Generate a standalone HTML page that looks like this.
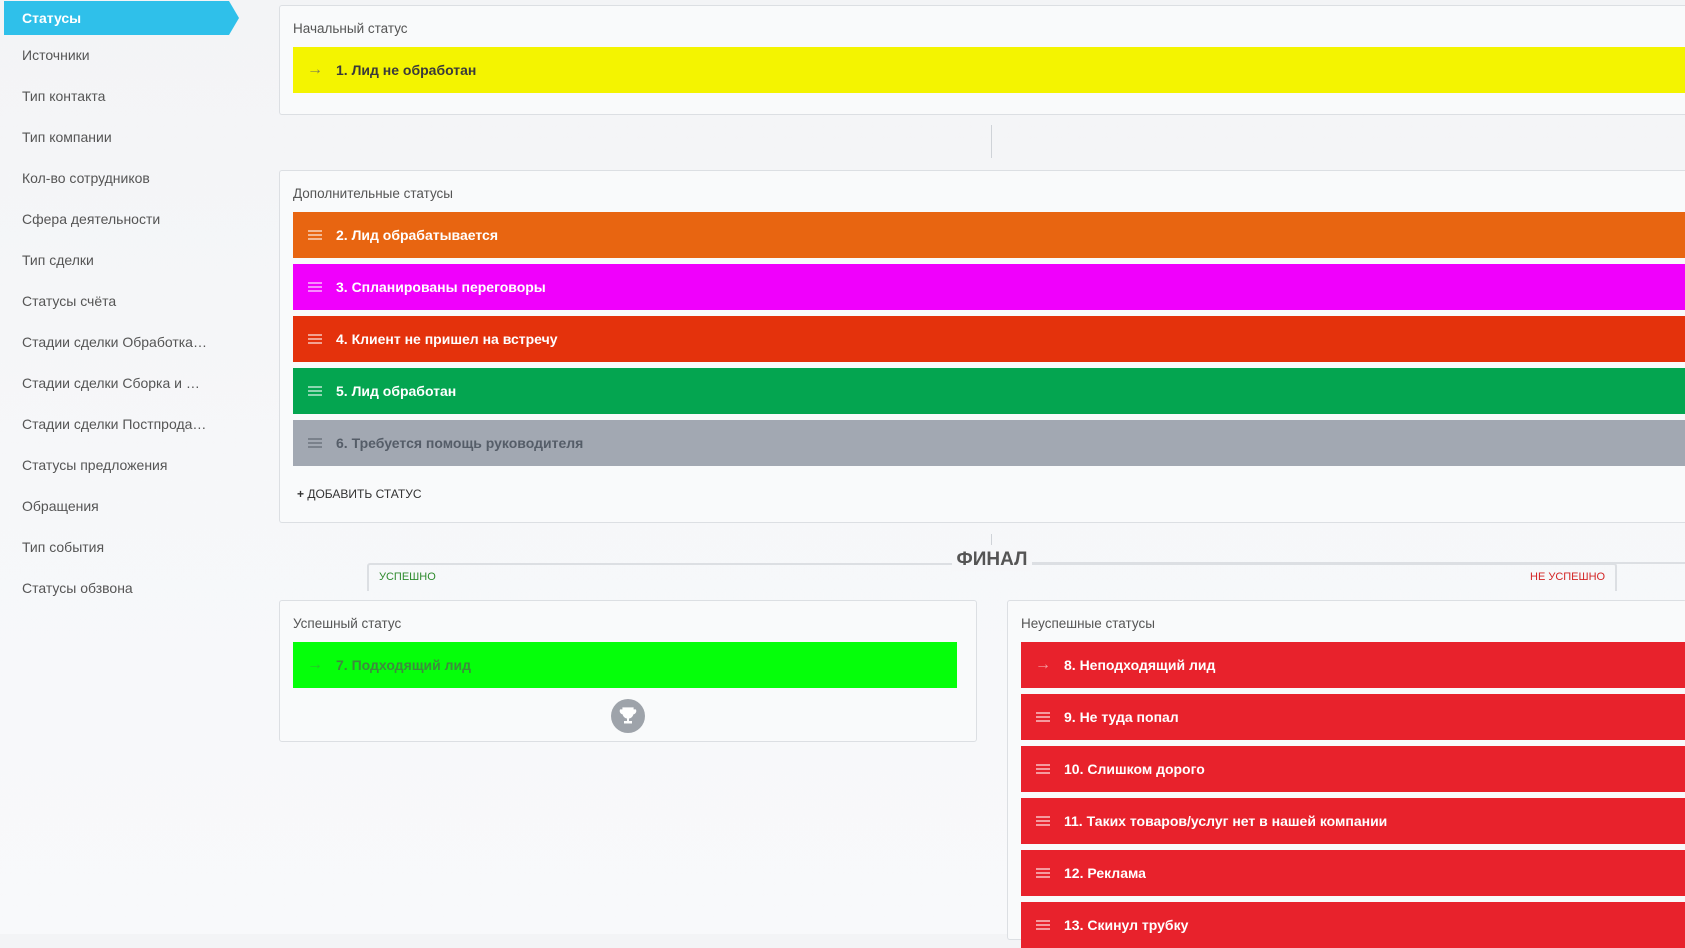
<!DOCTYPE html>
<html><head><meta charset="utf-8"><style>
*{margin:0;padding:0;box-sizing:border-box}
body{width:1685px;height:934px;overflow:hidden;position:relative;font-family:"Liberation Sans",Arial,sans-serif;background:linear-gradient(180deg,#f3f4f6 0%,#f6f7f9 50%,#f8f9fb 100%);color:#333}
.tab{position:absolute;left:4px;top:1px;width:235px;height:34px;background:#2fc0ea;clip-path:polygon(0 0,225px 0,235px 17px,225px 34px,0 34px);color:#fff;font-weight:bold;font-size:14px;line-height:34px;padding-left:18px}
.nav{position:absolute;left:22px;font-size:14px;color:#555}
.panel{position:absolute;background:#f9fafb;border:1px solid #dcdfe3;border-right:none;border-radius:3px}
.ptitle{position:absolute;font-size:13.5px;color:#555}
.bar{position:absolute;height:46px;font-weight:bold;font-size:14px;line-height:46px;color:#fff}
.bar .ic{position:absolute;left:15px;top:18px;width:14px;height:2px;background:rgba(255,255,255,.55);box-shadow:0 4px 0 rgba(255,255,255,.55),0 8px 0 rgba(255,255,255,.55)}
.bar .ar{position:absolute;left:14px;top:0;font-weight:normal;font-size:16px;opacity:.55}
.bar .t{position:absolute;left:43px}
</style></head><body>
<div class="tab">Статусы</div>
<div class="nav" style="top:47px">Источники</div>
<div class="nav" style="top:88px">Тип контакта</div>
<div class="nav" style="top:129px">Тип компании</div>
<div class="nav" style="top:170px">Кол-во сотрудников</div>
<div class="nav" style="top:211px">Сфера деятельности</div>
<div class="nav" style="top:252px">Тип сделки</div>
<div class="nav" style="top:293px">Статусы счёта</div>
<div class="nav" style="top:334px">Стадии сделки Обработка…</div>
<div class="nav" style="top:375px">Стадии сделки Сборка и …</div>
<div class="nav" style="top:416px">Стадии сделки Постпрода…</div>
<div class="nav" style="top:457px">Статусы предложения</div>
<div class="nav" style="top:498px">Обращения</div>
<div class="nav" style="top:539px">Тип события</div>
<div class="nav" style="top:580px">Статусы обзвона</div>

<div class="panel" style="left:279px;top:5px;width:1410px;height:110px"></div>
<div class="ptitle" style="left:293px;top:21px">Начальный статус</div>
<div class="bar" style="left:293px;top:47px;width:1400px;background:#f4f400;color:#3a3a3a"><span class="ar" style="color:#666;opacity:.8">→</span><span class="t">1. Лид не обработан</span></div>

<div style="position:absolute;left:991px;top:125px;width:1px;height:33px;background:#cfd3d8"></div>

<div class="panel" style="left:279px;top:170px;width:1410px;height:353px"></div>
<div class="ptitle" style="left:293px;top:186px">Дополнительные статусы</div>
<div class="bar" style="left:293px;top:212px;width:1400px;background:#e86511"><span class="ic"></span><span class="t">2. Лид обрабатывается</span></div>
<div class="bar" style="left:293px;top:264px;width:1400px;background:#f000fc"><span class="ic"></span><span class="t">3. Спланированы переговоры</span></div>
<div class="bar" style="left:293px;top:316px;width:1400px;background:#e4320c"><span class="ic"></span><span class="t">4. Клиент не пришел на встречу</span></div>
<div class="bar" style="left:293px;top:368px;width:1400px;background:#04a550"><span class="ic"></span><span class="t">5. Лид обработан</span></div>
<div class="bar" style="left:293px;top:420px;width:1400px;background:#a2a8b2;color:#555d68"><span class="ic" style="background:#7a818b;box-shadow:0 4px 0 #7a818b,0 8px 0 #7a818b"></span><span class="t">6. Требуется помощь руководителя</span></div>
<div style="position:absolute;left:297px;top:487px;font-size:12px;color:#333"><b>+</b> ДОБАВИТЬ СТАТУС</div>

<div style="position:absolute;left:991px;top:534px;width:1px;height:11px;background:#cfd3d8"></div>
<div style="position:absolute;left:367px;top:563px;width:1250px;height:28px;border:2px solid #dcdfe3;border-bottom:none;border-radius:3px 3px 0 0"></div>
<div style="position:absolute;left:1030px;top:562px;width:655px;height:2px;background:#dcdfe3"></div>
<div style="position:absolute;left:952px;top:549px;width:80px;text-align:center;background:#f6f7f9;font-weight:bold;font-size:19px;color:#555">ФИНАЛ</div>
<div style="position:absolute;left:379px;top:571px;font-size:11px;color:#2e8b2e">УСПЕШНО</div>
<div style="position:absolute;left:1530px;top:571px;font-size:11px;color:#d32626">НЕ УСПЕШНО</div>

<div class="panel" style="left:279px;top:600px;width:698px;height:142px;border-right:1px solid #dcdfe3"></div>
<div class="ptitle" style="left:293px;top:616px">Успешный статус</div>
<div class="bar" style="left:293px;top:642px;width:664px;background:#05ff0a;color:#3e8a3e"><span class="ar" style="color:#4a8a4a">→</span><span class="t">7. Подходящий лид</span></div>
<div style="position:absolute;left:611px;top:699px;width:34px;height:34px;border-radius:50%;background:#9ea3aa"></div>
<svg style="position:absolute;left:618px;top:706px" width="20" height="20" viewBox="0 0 20 20"><path d="M5 2h10v5a5 5 0 0 1-10 0z M5 4H2.5a3 3 0 0 0 3 4 M15 4h2.5a3 3 0 0 1-3 4" fill="#fff" stroke="#fff" stroke-width="1.2"/><rect x="9" y="11" width="2" height="4" fill="#fff"/><rect x="6" y="15" width="8" height="2.5" fill="#fff"/></svg>

<div class="panel" style="left:1007px;top:600px;width:680px;height:340px"></div>
<div class="ptitle" style="left:1021px;top:616px">Неуспешные статусы</div>
<div class="bar" style="left:1021px;top:642px;width:670px;background:#e8222c"><span class="ar">→</span><span class="t">8. Неподходящий лид</span></div>
<div class="bar" style="left:1021px;top:694px;width:670px;background:#e8222c"><span class="ic"></span><span class="t">9. Не туда попал</span></div>
<div class="bar" style="left:1021px;top:746px;width:670px;background:#e8222c"><span class="ic"></span><span class="t">10. Слишком дорого</span></div>
<div class="bar" style="left:1021px;top:798px;width:670px;background:#e8222c"><span class="ic"></span><span class="t">11. Таких товаров/услуг нет в нашей компании</span></div>
<div class="bar" style="left:1021px;top:850px;width:670px;background:#e8222c"><span class="ic"></span><span class="t">12. Реклама</span></div>
<div class="bar" style="left:1021px;top:902px;width:670px;background:#e8222c"><span class="ic"></span><span class="t">13. Скинул трубку</span></div>
</body></html>
